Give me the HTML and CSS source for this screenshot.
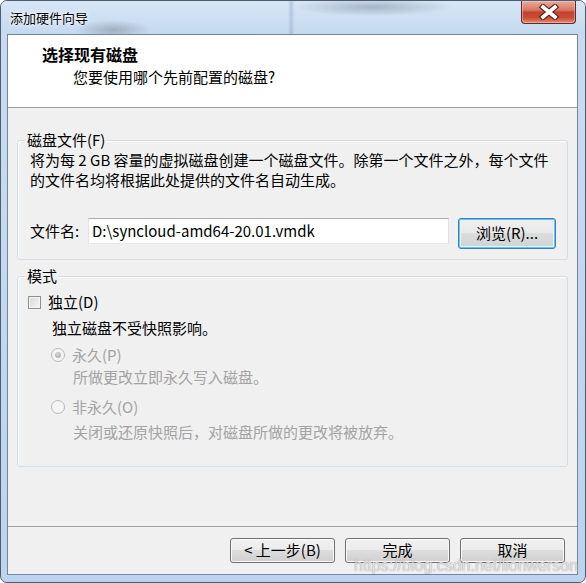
FILE: index.html
```html
<!DOCTYPE html>
<html>
<head>
    <meta charset="utf-8" />
    <title>添加硬件向导</title>
    <link rel="stylesheet" href="styles.css">
</head>
<body>
<div class="window">
    <div class="titlebar">
        <span class="caption">添加硬件向导</span>
        <div class="closeButton">
            <svg width="22" height="16" viewBox="0 0 22 16">
                <path d="M5 3 L17 13 M17 3 L5 13" stroke="#5a2a22" stroke-width="6" stroke-linecap="square" fill="none"/>
                <path d="M5 3 L17 13 M17 3 L5 13" stroke="#fff" stroke-width="3.6" stroke-linecap="square" fill="none"/>
            </svg>
        </div>
    </div>
    <div class="client">
        <div class="header">
            <div class="headTitle">选择现有磁盘</div>
            <div class="headSub">您要使用哪个先前配置的磁盘?</div>
        </div>
        <div class="body">
            <fieldset class="group">
                <legend>磁盘文件(F)</legend>
                <div class="groupFile">
                    <p class="desc">将为每 2 GB 容量的虚拟磁盘创建一个磁盘文件。除第一个文件之外，每个文件<br>的文件名均将根据此处提供的文件名自动生成。</p>
                    <div class="fileRow">
                        <span class="fileLabel">文件名:</span>
                        <div class="inputClass">D:\syncloud-amd64-20.01.vmdk</div>
                        <div class="buttonClass buttonFocus">浏览(R)...</div>
                    </div>
                </div>
            </fieldset>
            <fieldset class="group groupMode">
                <legend>模式</legend>
                <div class="modeBody">
                    <div class="optRow checkRow"><span class="checkbox"></span>独立(D)</div>
                    <div class="note noteFirst">独立磁盘不受快照影响。</div>
                    <div class="optRow radioRow disabled"><span class="radio checked"></span>永久(P)</div>
                    <div class="note noteSub disabled">所做更改立即永久写入磁盘。</div>
                    <div class="optRow radioRow radioSecond disabled"><span class="radio"></span>非永久(O)</div>
                    <div class="note noteLast disabled">关闭或还原快照后，对磁盘所做的更改将被放弃。</div>
                </div>
            </fieldset>
        </div>
        <div class="footer">
            <div class="buttonClass">&lt;&nbsp;上一步(B)</div>
            <div class="buttonClass">完成</div>
            <div class="buttonClass">取消</div>
        </div>
    </div>
    <div class="watermark">https://blog.csdn.net/lionwerson</div>
</div>
</body>
</html>
```

FILE: styles.css
```css
html, body {
    margin:0; padding:0;
}
body {
    width:586px; height:583px; background:#fff;
    font-family: "Noto Sans CJK SC", sans-serif; color:#000; font-size:15px;
}
.window {
    position:relative; box-sizing:border-box; width:586px; height:583px;
    border:1px solid #4d5d70; border-radius:7px; overflow:hidden;
    display:flex; flex-direction:column;
    background: linear-gradient(#c9dcf1, #bcd4ee);
}
/* aero title bar with the blurred desktop behind it */
.titlebar {
    height:33px; flex:none; display:flex; align-items:flex-start;
    background:
        radial-gradient(ellipse 38px 10px at 112px 29px, rgba(105,110,120,.4), transparent),
        radial-gradient(ellipse 80px 9px at 372px 6px, rgba(100,112,135,.4), transparent),
        linear-gradient(to right, transparent 287px, rgba(140,165,200,.45) 290px, transparent 294px),
        linear-gradient(#d7e6f6, #c4d9ef);
}
.caption {
    font-size:13px; line-height:16px; margin:9px 0 0 9px;
    text-shadow: 0 0 6px #fff, 0 0 3px #fff;
}
.closeButton {
    margin-left:auto; margin-right:9px; width:55px; height:23px; box-sizing:border-box;
    border:1px solid #5e2a24; border-top:none; border-radius:0 0 4px 4px;
    display:flex; align-items:center; justify-content:center;
    background: linear-gradient(#e9aa9c 0%, #d77a68 40%, #c4432f 52%, #c84b36 75%, #e58a6c 100%);
    box-shadow: inset 0 0 0 1px rgba(255,220,210,.45);
}
.client {
    flex:1; margin:0 7px 7px 6px; border:1px solid #7585a0;
    background:#f0f0f0; display:flex; flex-direction:column;
}
.header {
    height:73px; box-sizing:border-box; flex:none; background:#fff;
    border-bottom:1px solid #a0a0a0; padding:9px 0 0 34px;
}
.headTitle {
    font-size:16px; font-weight:bold; line-height:20px;
}
.headSub {
    font-size:15px; line-height:20px; margin:3px 0 0 31px;
}
.body {
    flex:1; padding:22px 9px 0; border-bottom:1px solid #a0a0a0;
}
.group {
    margin:0; padding:0; min-width:0;
    border:1px solid #d5dfe5; border-radius:3px;
    box-shadow: inset 1px 1px 0 #fff;
}
.group legend {
    margin-left:8px; padding:0 1px; font-size:15px; line-height:20px; background:#f0f0f0;
}
.groupFile {
    padding:0 11px 10px 12px;
}
.desc {
    margin:0; font-size:15px; line-height:20px;
}
.fileRow {
    display:flex; align-items:flex-start; margin-top:28px;
}
.fileLabel {
    width:58px; flex:none; line-height:20px; margin-top:3px;
}
.inputClass {
    width:361px; height:26px; box-sizing:border-box; background:#fff;
    border:1px solid #e2e3ea; border-top-color:#abadb3; border-bottom-color:#e3e9ef;
    padding:0 3px; line-height:23px; font-size:15px;
}
.buttonClass {
    width:105px; height:25px; box-sizing:border-box; text-align:center;
    border:1px solid #707070; border-radius:3px; line-height:22px; font-size:15px;
    background: linear-gradient(#f2f2f2 0%, #ebebeb 50%, #dddddd 50%, #cfcfcf 100%);
    box-shadow: inset 0 0 0 1px #fcfcfc;
}
.buttonFocus {
    width:98px; height:31px; margin-left:9px; line-height:28px;
    border-color:#3c7fb1;
    box-shadow: inset 0 0 0 1px #5fc7ef, inset 0 0 0 2px #e6f5fc;
    background: linear-gradient(#f0f0f0 0%, #e8e8e8 50%, #dcdcdc 50%, #cfd3d6 100%);
}
.groupMode {
    margin-top:6px;
}
.modeBody {
    padding:0 10px 24px 10px;
}
.optRow {
    display:flex; align-items:center; line-height:20px;
}
.checkRow {
    margin-top:6px;
}
.checkbox {
    width:13px; height:13px; box-sizing:border-box; margin-right:7px;
    border:1px solid #8e8f8f;
    background: linear-gradient(135deg, #d3d6d9, #f8f8f8);
    box-shadow: inset 0 0 0 1px #f4f4f4;
}
.note {
    line-height:20px;
}
.noteFirst {
    margin:6px 0 0 24px;
}
.radioRow {
    margin:7px 0 0 23px;
}
.radioSecond {
    margin-top:10px;
}
.noteSub {
    margin:2px 0 0 45px;
}
.noteLast {
    margin:5px 0 0 45px;
}
.radio {
    width:14px; height:14px; box-sizing:border-box; margin-right:7px; border-radius:50%;
    border:1px solid #b9b9b9; background:#f4f4f4;
    display:flex; align-items:center; justify-content:center;
}
.radio.checked::after {
    content:""; width:6px; height:6px; border-radius:50%;
    background: radial-gradient(circle at 40% 35%, #d8d8d8, #a2a2a2);
}
.disabled {
    color:#a3a3a3;
}
.footer {
    height:47px; flex:none; box-sizing:border-box;
    display:flex; justify-content:flex-end; gap:10px; padding:11px 12px 0 0;
}
.watermark {
    position:absolute; left:353px; top:555px;
    font-family:"Liberation Sans", sans-serif; font-size:16px; line-height:20px;
    color:rgba(255,255,255,.75); text-shadow: 0 0 1px rgba(0,0,0,.5);
}
```
